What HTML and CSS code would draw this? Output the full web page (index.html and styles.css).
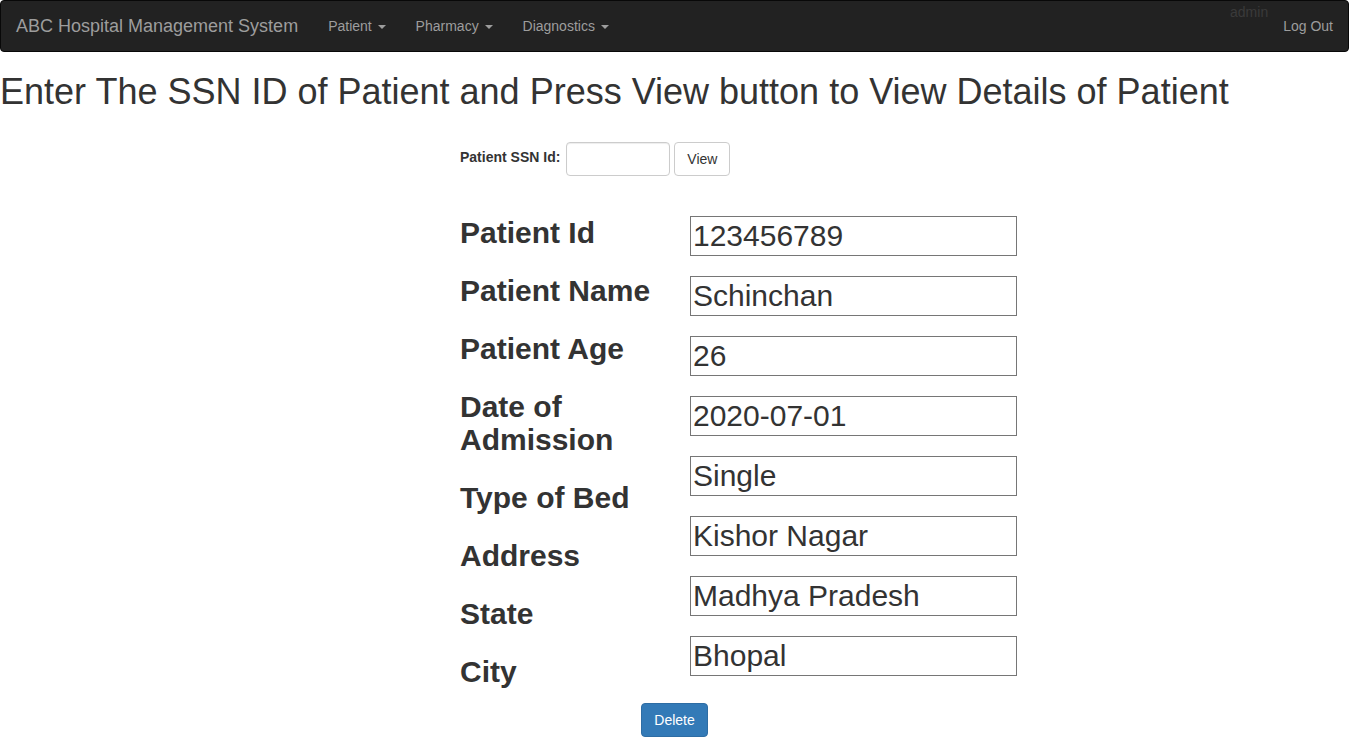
FILE: index.html
```html
<!DOCTYPE html>
<html>
<head>
<meta charset="utf-8">
<title>ABC Hospital Management System</title>
<link rel="stylesheet" href="styles.css">
</head>
<body>
<div class="page">
  <nav class="navbar">
    <a class="brand" href="#">ABC Hospital Management System</a>
    <ul class="nav">
      <li><a href="#">Patient <span class="caret"></span></a></li>
      <li><a href="#">Pharmacy <span class="caret"></span></a></li>
      <li><a href="#">Diagnostics <span class="caret"></span></a></li>
    </ul>
    <div class="nav-right">
      <span class="user">admin</span>
      <a class="logout" href="#">Log Out</a>
    </div>
  </nav>

  <h1 class="title">Enter The SSN ID of Patient and Press View button to View Details of Patient</h1>

  <div class="content">
    <form class="search">
      <label class="search-label" for="ssn">Patient SSN Id:</label>
      <input class="search-input" id="ssn" type="text">
      <button class="btn" type="button">View</button>
    </form>

    <div class="details">
      <div class="labels">
        <div class="lbl">Patient Id</div>
        <div class="lbl">Patient Name</div>
        <div class="lbl">Patient Age</div>
        <div class="lbl">Date of Admission</div>
        <div class="lbl">Type of Bed</div>
        <div class="lbl">Address</div>
        <div class="lbl">State</div>
        <div class="lbl">City</div>
      </div>
      <div class="fields">
        <input class="field" type="text" value="123456789">
        <input class="field" type="text" value="Schinchan">
        <input class="field" type="text" value="26">
        <input class="field" type="text" value="2020-07-01">
        <input class="field" type="text" value="Single">
        <input class="field" type="text" value="Kishor Nagar">
        <input class="field" type="text" value="Madhya Pradesh">
        <input class="field" type="text" value="Bhopal">
      </div>
    </div>
  </div>

  <div class="actions">
    <button class="btn btn-primary" type="button">Delete</button>
  </div>
</div>
</body>
</html>
```

FILE: styles.css
```css
* { box-sizing: border-box; }

html, body {
  margin: 0;
  padding: 0;
  background: #fff;
}

body {
  font-family: "Liberation Sans", Arial, sans-serif;
  font-size: 14px;
  line-height: 1.42857;
  color: #333;
}

.page {
  width: 1349px;
}

.navbar {
  display: flex;
  align-items: stretch;
  height: 52px;
  background: #222;
  border: 1px solid #080808;
  border-radius: 4px;
  margin-bottom: 20px;
}

.brand {
  padding: 15px;
  font-size: 18px;
  line-height: 20px;
  color: #9d9d9d;
  text-decoration: none;
}

.nav {
  display: flex;
  list-style: none;
  margin: 0;
  padding: 0;
}

.nav a {
  display: block;
  padding: 15px;
  line-height: 20px;
  color: #9d9d9d;
  text-decoration: none;
}

.caret {
  display: inline-block;
  width: 0;
  height: 0;
  margin-left: 2px;
  vertical-align: middle;
  border-top: 4px solid;
  border-left: 4px solid transparent;
  border-right: 4px solid transparent;
}

.nav-right {
  margin-left: auto;
  display: flex;
  align-items: flex-start;
}

.user {
  font-size: 14px;
  line-height: 20px;
  color: #3a3a3a;
  padding-top: 1px;
}

.logout {
  padding: 15px;
  line-height: 20px;
  color: #9d9d9d;
  text-decoration: none;
}

.title {
  margin: 0 0 10px;
  font-size: 36px;
  font-weight: 500;
  line-height: 1.1;
  color: #333;
}

.content {
  padding-left: 460px;
  padding-top: 20px;
}

.search {
  display: flex;
  align-items: center;
  gap: 4px;
  margin: 0 0 40px;
}

.search-label {
  font-weight: bold;
  font-size: 14px;
  margin-top: -2px;
  margin-right: 2px;
}

.search-input {
  width: 104px;
  height: 34px;
  border: 1px solid #ccc;
  border-radius: 4px;
  padding: 6px 12px;
  font: inherit;
  box-shadow: inset 0 1px 1px rgba(0,0,0,.075);
}

.btn {
  height: 34px;
  padding: 6px 12px;
  font-family: inherit;
  font-size: 14px;
  line-height: 20px;
  color: #333;
  background: #fff;
  border: 1px solid #ccc;
  border-radius: 4px;
}

.btn-primary {
  color: #fff;
  background: #337ab7;
  border-color: #2e6da4;
}

.details {
  display: flex;
  align-items: flex-start;
}

.labels {
  width: 230px;
  display: flex;
  flex-direction: column;
  gap: 25px;
}

.lbl {
  font-size: 30px;
  font-weight: bold;
  line-height: 33px;
  color: #333;
  padding-right: 20px;
}

.fields {
  display: flex;
  flex-direction: column;
  gap: 20px;
}

.field {
  width: 327px;
  height: 40px;
  border: 1px solid #767676;
  padding: 1px 2px;
  font-family: "Liberation Sans", Arial, sans-serif;
  font-size: 30px;
  color: #333;
  background: #fff;
}

.actions {
  display: flex;
  justify-content: center;
  padding-top: 15px;
}
```
